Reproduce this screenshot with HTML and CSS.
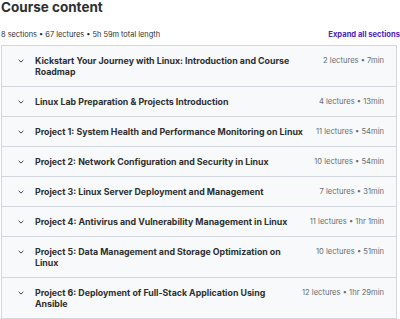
FILE: index.html
```html
<!DOCTYPE html>
<html>
<head>
<meta charset="utf-8">
<link rel="stylesheet" href="styles.css">
</head>
<body>
<div class="page">
  <h2 class="title">Course content</h2>
  <div class="summary">
    <span class="stats">8 sections • 67 lectures • 5h 59m total length</span>
    <button class="expand">Expand all sections</button>
  </div>
  <div class="sections">
    <div class="section">
      <svg class="chev" viewBox="0 0 6 4"><path d="M0.6 0.8 L3 3.1 L5.4 0.8" fill="none" stroke="#2d2f31" stroke-width="0.9"/></svg>
      <span class="name">Kickstart Your Journey with Linux: Introduction and Course Roadmap</span>
      <span class="meta">2 lectures • 7min</span>
    </div>
    <div class="section">
      <svg class="chev" viewBox="0 0 6 4"><path d="M0.6 0.8 L3 3.1 L5.4 0.8" fill="none" stroke="#2d2f31" stroke-width="0.9"/></svg>
      <span class="name">Linux Lab Preparation &amp; Projects Introduction</span>
      <span class="meta">4 lectures • 13min</span>
    </div>
    <div class="section">
      <svg class="chev" viewBox="0 0 6 4"><path d="M0.6 0.8 L3 3.1 L5.4 0.8" fill="none" stroke="#2d2f31" stroke-width="0.9"/></svg>
      <span class="name">Project 1: System Health and Performance Monitoring on Linux</span>
      <span class="meta">11 lectures • 54min</span>
    </div>
    <div class="section">
      <svg class="chev" viewBox="0 0 6 4"><path d="M0.6 0.8 L3 3.1 L5.4 0.8" fill="none" stroke="#2d2f31" stroke-width="0.9"/></svg>
      <span class="name">Project 2: Network Configuration and Security in Linux</span>
      <span class="meta">10 lectures • 54min</span>
    </div>
    <div class="section">
      <svg class="chev" viewBox="0 0 6 4"><path d="M0.6 0.8 L3 3.1 L5.4 0.8" fill="none" stroke="#2d2f31" stroke-width="0.9"/></svg>
      <span class="name">Project 3: Linux Server Deployment and Management</span>
      <span class="meta">7 lectures • 31min</span>
    </div>
    <div class="section">
      <svg class="chev" viewBox="0 0 6 4"><path d="M0.6 0.8 L3 3.1 L5.4 0.8" fill="none" stroke="#2d2f31" stroke-width="0.9"/></svg>
      <span class="name">Project 4: Antivirus and Vulnerability Management in Linux</span>
      <span class="meta">11 lectures • 1hr 1min</span>
    </div>
    <div class="section">
      <svg class="chev" viewBox="0 0 6 4"><path d="M0.6 0.8 L3 3.1 L5.4 0.8" fill="none" stroke="#2d2f31" stroke-width="0.9"/></svg>
      <span class="name">Project 5: Data Management and Storage Optimization on Linux</span>
      <span class="meta">10 lectures • 51min</span>
    </div>
    <div class="section">
      <svg class="chev" viewBox="0 0 6 4"><path d="M0.6 0.8 L3 3.1 L5.4 0.8" fill="none" stroke="#2d2f31" stroke-width="0.9"/></svg>
      <span class="name">Project 6: Deployment of Full-Stack Application Using Ansible</span>
      <span class="meta">12 lectures • 1hr 29min</span>
    </div>
  </div>
</div>
</body>
</html>
```
FILE: styles.css
```css
* { box-sizing: border-box; }
html, body { margin: 0; padding: 0; background: #fff; }
body {
  font-family: Inter, "Noto Sans", sans-serif;
  color: #2d2f31;
  overflow: hidden;
}
.page { width: 400px; padding: 0 1px 0 1px; }
.title {
  margin: 0;
  font-size: 13.5px;
  line-height: 15px;
  font-weight: 700;
}
.summary {
  display: flex;
  justify-content: space-between;
  align-items: center;
  height: 16px;
  margin-top: 11px;
  margin-bottom: 3px;
}
.stats { font-size: 7.4px; color: #2d2f31; }
.expand {
  border: 0; background: none; padding: 0;
  font-family: inherit;
  font-size: 7.6px;
  font-weight: 700;
  color: #5022c3;
  margin-right: -1px;
}
.sections {
  width: 396px;
  border: 1px solid #d1d7dc;
}
.section {
  display: flex;
  align-items: flex-start;
  background: #f7f9fa;
  padding: 9px 12px 9px 16px;
  border-top: 1px solid #d1d7dc;
}
.section:first-child { border-top: 0; }
.chev { width: 6px; height: 4px; margin-top: 3.5px; flex: none; }
.name {
  flex: 1;
  margin-left: 11px;
  margin-right: 12px;
  font-size: 8.8px;
  line-height: 11px;
  font-weight: 700;
}
.meta {
  flex: none;
  font-size: 7.6px;
  line-height: 11px;
  color: #6a6f73;
}
```
